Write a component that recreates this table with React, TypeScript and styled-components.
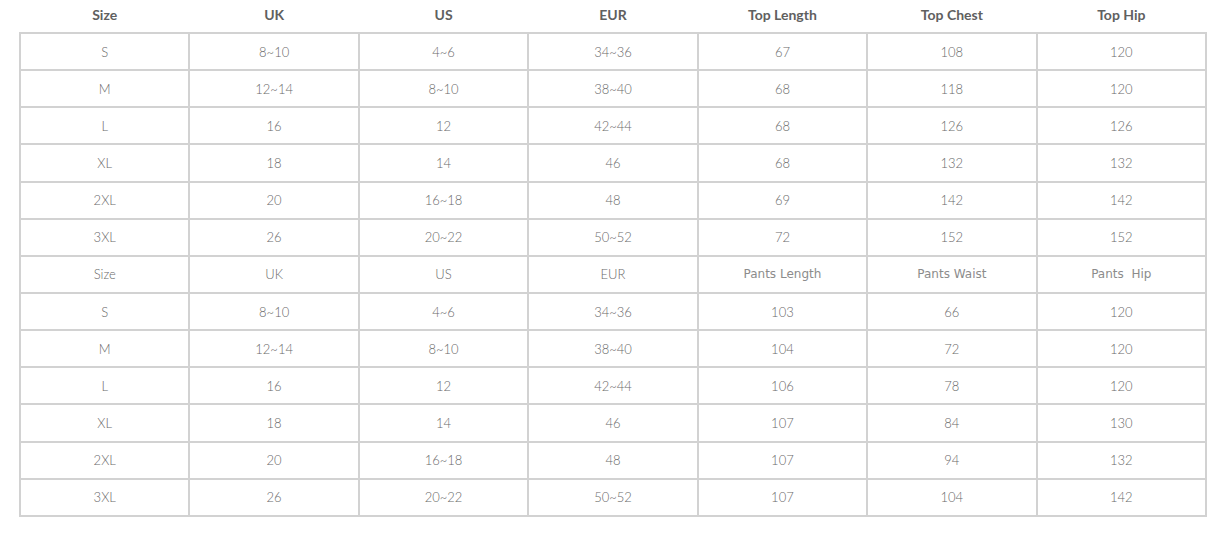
import React, { ReactElement } from "react";
import styled, { createGlobalStyle } from "styled-components";

const GlobalStyle = createGlobalStyle`
  html, body {
    margin: 0;
    padding: 0;
    background: #fff;
  }
  body {
    font-family: Lato, "Open Sans", sans-serif;
  }
`;

const Page = styled.div`
  padding: 0 14px 0 19px;
  width: 1188px;
`;

const HeadRow = styled.div`
  display: grid;
  grid-template-columns: repeat(7, 1fr);
  column-gap: 2px;
  padding: 0 2px 4px;
  height: 28px;
  align-items: center;
  text-align: center;
  font-weight: 700;
  font-size: 14px;
  color: #606060;
`;

const Grid = styled.div`
  display: grid;
  grid-template-columns: repeat(7, 1fr);
  grid-auto-rows: 35.15px;
  gap: 2px;
  padding: 2px;
  background: #d2d2d2;
`;

const Cell = styled.div<{ alt?: boolean }>`
  background: #fff;
  display: flex;
  align-items: center;
  justify-content: center;
  font-family: ${p =>
    p.alt ? `"DejaVu Sans", Tahoma, sans-serif` : `Lato, "Open Sans", sans-serif`};
  font-size: ${p => (p.alt ? "12px" : "13px")};
  font-weight: ${p => (p.alt ? 400 : 300)};
  color: ${p => (p.alt ? "#8c8c8c" : "#6a6a6a")};
  white-space: pre;
`;

const topHead = ["Size", "UK", "US", "EUR", "Top Length", "Top Chest", "Top Hip"];

const topRows = [
  ["S", "8~10", "4~6", "34~36", "67", "108", "120"],
  ["M", "12~14", "8~10", "38~40", "68", "118", "120"],
  ["L", "16", "12", "42~44", "68", "126", "126"],
  ["XL", "18", "14", "46", "68", "132", "132"],
  ["2XL", "20", "16~18", "48", "69", "142", "142"],
  ["3XL", "26", "20~22", "50~52", "72", "152", "152"]
];

const pantsHead = ["Size", "UK", "US", "EUR", "Pants Length", "Pants Waist", "Pants  Hip"];

const pantsRows = [
  ["S", "8~10", "4~6", "34~36", "103", "66", "120"],
  ["M", "12~14", "8~10", "38~40", "104", "72", "120"],
  ["L", "16", "12", "42~44", "106", "78", "120"],
  ["XL", "18", "14", "46", "107", "84", "130"],
  ["2XL", "20", "16~18", "48", "107", "94", "132"],
  ["3XL", "26", "20~22", "50~52", "107", "104", "142"]
];

const App = (): ReactElement => {
  return (
    <Page>
      <GlobalStyle />
      <HeadRow>
        {topHead.map(h => (
          <div key={h}>{h}</div>
        ))}
      </HeadRow>
      <Grid>
        {topRows.map((row, r) =>
          row.map((v, c) => <Cell key={`t${r}-${c}`}>{v}</Cell>)
        )}
        {pantsHead.map((h, c) => (
          <Cell key={`ph${c}`} alt={c >= 4}>
            {h}
          </Cell>
        ))}
        {pantsRows.map((row, r) =>
          row.map((v, c) => <Cell key={`p${r}-${c}`}>{v}</Cell>)
        )}
      </Grid>
    </Page>
  );
};

export default App;
